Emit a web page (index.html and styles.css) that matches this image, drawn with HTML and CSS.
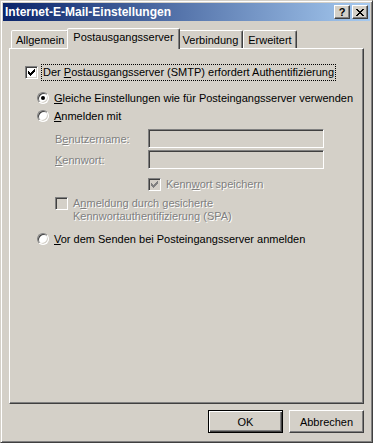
FILE: index.html
```html
<!DOCTYPE html>
<html lang="de">
<head>
  <meta charset="UTF-8">
  <title>Internet-E-Mail-Einstellungen</title>
  <link rel="stylesheet" href="styles.css">
</head>
<body>

  <div class="window">
    <div class="titlebar">
      <span class="title">Internet-E-Mail-Einstellungen</span>
      <div class="title-buttons">
        <div class="title-btn help">?</div>
        <div class="title-btn">
          <svg width="8" height="7" viewBox="0 0 8 7" shape-rendering="crispEdges">
            <path d="M0 0h2v1h-2zM6 0h2v1h-2zM1 1h2v1h-2zM5 1h2v1h-2zM2 2h4v1h-4zM3 3h2v1h-2zM2 4h4v1h-4zM1 5h2v1h-2zM5 5h2v1h-2zM0 6h2v1h-2zM6 6h2v1h-2z" fill="#000"/>
          </svg>
        </div>
      </div>
    </div>

    <div class="dialog">
      <div class="tabs">
        <div class="tab">Allgemein</div>
        <div class="tab active">Postausgangsserver</div>
        <div class="tab">Verbindung</div>
        <div class="tab">Erweitert</div>
      </div>

      <div class="panel">
        <div class="option">
          <span class="checkbox checked">
            <svg width="7" height="7" viewBox="0 0 7 7" shape-rendering="crispEdges"><path d="M6 0h1v3h-1zM5 1h1v3h-1zM0 2h1v3h-1zM4 2h1v3h-1zM1 3h1v3h-1zM3 3h1v3h-1zM2 4h1v3h-1z"/></svg>
          </span>
          <span class="label focus">Der <u>P</u>ostausgangsserver (SMTP) erfordert Authentifizierung</span>
        </div>

        <div class="option radio-row first-radio">
          <span class="radio checked"></span>
          <span class="label"><u>G</u>leiche Einstellungen wie für Posteingangsserver verwenden</span>
        </div>

        <div class="option radio-row second-radio">
          <span class="radio"></span>
          <span class="label"><u>A</u>nmelden mit</span>
        </div>

        <div class="login-fields">
          <span class="disabled">B<u>e</u>nutzername:</span>
          <div class="field"></div>
          <span class="disabled"><u>K</u>ennwort:</span>
          <div class="field"></div>
        </div>

        <div class="option save-row">
          <span class="checkbox checked off">
            <svg width="7" height="7" viewBox="0 0 7 7" shape-rendering="crispEdges"><path d="M6 0h1v3h-1zM5 1h1v3h-1zM0 2h1v3h-1zM4 2h1v3h-1zM1 3h1v3h-1zM3 3h1v3h-1zM2 4h1v3h-1z"/></svg>
          </span>
          <span class="label disabled">Kenn<u>w</u>ort speichern</span>
        </div>

        <div class="option spa-row">
          <span class="checkbox off"></span>
          <span class="label disabled">A<u>n</u>meldung durch gesicherte<br>Kennwortauthentifizierung (SPA)</span>
        </div>

        <div class="option radio-row last-radio">
          <span class="radio"></span>
          <span class="label"><u>V</u>or dem Senden bei Posteingangsserver anmelden</span>
        </div>
      </div>

      <div class="footer">
        <div class="btn default">OK</div>
        <div class="btn">Abbrechen</div>
      </div>
    </div>
  </div>

</body>
</html>
```

FILE: styles.css
```css
body {
  margin: 0;
  font-family: "Liberation Sans", Arial, sans-serif;
  font-size: 11px;
  color: #000;
  background-color: #d4d0c8;
}

.window {
  width: 373px;
  height: 443px;
  box-sizing: border-box;
  padding: 2px;
  background-color: #d4d0c8;
  border: 1px solid;
  border-color: #d4d0c8 #404040 #404040 #d4d0c8;
  box-shadow: inset 1px 1px #fff, inset -1px -1px #808080;
  display: flex;
  flex-direction: column;
}

/* title bar */

.titlebar {
  height: 18px;
  display: flex;
  align-items: center;
  padding: 0 2px;
  background: linear-gradient(to right, #0a246a, #a6caf0);
}

.title {
  flex: 1;
  color: #fff;
  font-weight: bold;
  font-size: 12px;
}

.title-buttons {
  display: flex;
  gap: 2px;
}

.title-btn {
  width: 16px;
  height: 14px;
  box-sizing: border-box;
  background-color: #d4d0c8;
  border: 1px solid;
  border-color: #fff #404040 #404040 #fff;
  box-shadow: inset -1px -1px #808080;
  display: flex;
  align-items: center;
  justify-content: center;
}

.title-btn.help {
  font-weight: bold;
  font-size: 11px;
  line-height: 12px;
}

/* dialog body */

.dialog {
  flex: 1;
  display: flex;
  flex-direction: column;
  padding: 7px 6px 7px 6px;
}

.tabs {
  height: 20px;
  display: flex;
  align-items: flex-end;
  padding-left: 2px;
  position: relative;
  z-index: 1;
}

.tab {
  height: 18px;
  box-sizing: border-box;
  padding: 1px 4px 0 4px;
  line-height: 16px;
  border: 1px solid;
  border-bottom: none;
  border-color: #fff #404040 transparent #fff;
  border-radius: 2px 2px 0 0;
  box-shadow: inset -1px 0 #808080;
  background-color: #d4d0c8;
}

.tab.active {
  height: 21px;
  padding: 0 5px;
  margin: 0 -2px -1px -2px;
  position: relative;
  z-index: 2;
}

.panel {
  flex: 1;
  padding: 15px 0 0 15px;
  border: 1px solid;
  border-color: #fff #404040 #404040 #fff;
  box-shadow: inset -1px -1px #808080;
  display: flex;
  flex-direction: column;
}

.option {
  display: flex;
  align-items: center;
  height: 16px;
}

.option .label {
  margin-left: 4px;
  line-height: 13px;
  padding: 1px;
}

.focus {
  outline: 1px dotted #000;
}

.radio-row {
  margin-left: 12px;
}

.first-radio { margin-top: 10px; }
.second-radio { margin-top: 2px; }
.last-radio { margin-top: 7px; }

.checkbox {
  width: 13px;
  height: 13px;
  box-sizing: border-box;
  flex-shrink: 0;
  background-color: #fff;
  border: 1px solid;
  border-color: #808080 #fff #fff #808080;
  box-shadow: inset 1px 1px #404040, inset -1px -1px #d4d0c8;
  display: flex;
  align-items: center;
  justify-content: center;
}

.checkbox svg { fill: #000; }
.checkbox.off { background-color: #d4d0c8; }
.checkbox.off svg { fill: #808080; }

.radio {
  width: 12px;
  height: 12px;
  box-sizing: border-box;
  flex-shrink: 0;
  border-radius: 50%;
  background-color: #fff;
  border: 1px solid;
  border-color: #808080 #fff #fff #808080;
  box-shadow: inset 1px 1px #404040, inset -1px -1px #d4d0c8;
  display: flex;
  align-items: center;
  justify-content: center;
}

.radio.checked::after {
  content: "";
  width: 4px;
  height: 4px;
  border-radius: 50%;
  background-color: #000;
}

.disabled {
  color: #808080;
  text-shadow: 1px 1px 0 #fff;
}

.login-fields {
  display: grid;
  grid-template-columns: 93px 176px;
  row-gap: 2px;
  align-items: center;
  margin: 5px 0 0 30px;
}

.field {
  height: 19px;
  box-sizing: border-box;
  background-color: #d4d0c8;
  border: 1px solid;
  border-color: #808080 #fff #fff #808080;
  box-shadow: inset 1px 1px #404040, inset -1px -1px #d4d0c8;
}

.save-row {
  margin: 7px 0 0 123px;
}

.spa-row {
  height: auto;
  align-items: flex-start;
  margin: 5px 0 0 30px;
}

.spa-row .label {
  padding-top: 0;
}

/* buttons */

.footer {
  display: flex;
  justify-content: flex-end;
  gap: 6px;
  margin-top: 6px;
}

.btn {
  width: 75px;
  height: 23px;
  box-sizing: border-box;
  border: 1px solid;
  border-color: #fff #404040 #404040 #fff;
  box-shadow: inset -1px -1px #808080;
  display: flex;
  align-items: center;
  justify-content: center;
}

.btn.default {
  border-color: #000;
  box-shadow: inset 1px 1px #fff, inset -1px -1px #404040, inset -2px -2px #808080;
}
```
